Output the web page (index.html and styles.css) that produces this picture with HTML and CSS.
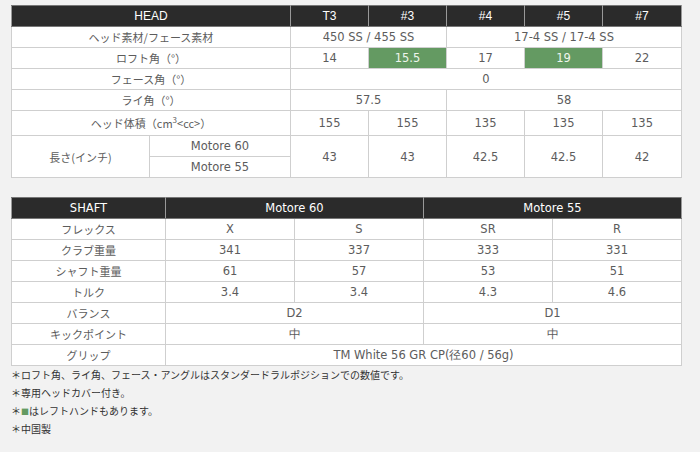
FILE: index.html
```html
<!DOCTYPE html>
<html lang="ja">
<head>
<meta charset="utf-8">
<link rel="stylesheet" href="styles.css">
</head>
<body>
<div class="page">
  <table class="spec head">
    <colgroup>
      <col class="c-lab"><col class="c-sub"><col class="c-d"><col class="c-d"><col class="c-d"><col class="c-d"><col class="c-d7">
    </colgroup>
    <tr class="hd">
      <th colspan="2">HEAD</th><th>T3</th><th>#3</th><th>#4</th><th>#5</th><th>#7</th>
    </tr>
    <tr><td colspan="2" class="jp">ヘッド素材/フェース素材</td><td colspan="2">450 SS / 455 SS</td><td colspan="3">17-4 SS / 17-4 SS</td></tr>
    <tr><td colspan="2" class="jp">ロフト角（°）</td><td>14</td><td class="green">15.5</td><td>17</td><td class="green">19</td><td>22</td></tr>
    <tr><td colspan="2" class="jp">フェース角（°）</td><td colspan="5">0</td></tr>
    <tr><td colspan="2" class="jp">ライ角（°）</td><td colspan="2">57.5</td><td colspan="3">58</td></tr>
    <tr class="tall"><td colspan="2" class="jp">ヘッド体積（cm<sup>3</sup>&lt;cc&gt;）</td><td>155</td><td>155</td><td>135</td><td>135</td><td>135</td></tr>
    <tr><td rowspan="2" class="jp">長さ(インチ)</td><td>Motore 60</td><td rowspan="2">43</td><td rowspan="2">43</td><td rowspan="2">42.5</td><td rowspan="2">42.5</td><td rowspan="2">42</td></tr>
    <tr><td>Motore 55</td></tr>
  </table>

  <table class="spec shaft">
    <colgroup>
      <col class="s-lab"><col class="s-d"><col class="s-d"><col class="s-d"><col class="s-d">
    </colgroup>
    <tr class="hd"><th>SHAFT</th><th colspan="2">Motore 60</th><th colspan="2">Motore 55</th></tr>
    <tr><td class="jp">フレックス</td><td>X</td><td>S</td><td>SR</td><td>R</td></tr>
    <tr><td class="jp">クラブ重量</td><td>341</td><td>337</td><td>333</td><td>331</td></tr>
    <tr><td class="jp">シャフト重量</td><td>61</td><td>57</td><td>53</td><td>51</td></tr>
    <tr><td class="jp">トルク</td><td>3.4</td><td>3.4</td><td>4.3</td><td>4.6</td></tr>
    <tr><td class="jp">バランス</td><td colspan="2">D2</td><td colspan="2">D1</td></tr>
    <tr><td class="jp">キックポイント</td><td colspan="2">中</td><td colspan="2">中</td></tr>
    <tr><td class="jp">グリップ</td><td colspan="4">TM White 56 GR CP(径60 / 56g)</td></tr>
  </table>

  <ul class="notes">
    <li>＊ロフト角、ライ角、フェース・アングルはスタンダードラルポジションでの数値です。</li>
    <li>＊専用ヘッドカバー付き。</li>
    <li>＊<span class="sq">■</span>はレフトハンドもあります。</li>
    <li>＊中国製</li>
  </ul>
</div>
</body>
</html>
```

FILE: styles.css
```css
html, body {
  margin: 0;
  padding: 0;
  background: #f2f2f2;
}
.page {
  padding: 5px 0 0 11px;
  width: 670px;
}
.spec {
  width: 670px;
  border-collapse: collapse;
  table-layout: fixed;
  background: #fff;
  font-family: "DejaVu Sans", Verdana, sans-serif;
  font-size: 11.5px;
  color: #5c5c5c;
}
.spec td, .spec th {
  border: 1px solid #cfcfcf;
  text-align: center;
  padding: 0;
  line-height: 14px;
  white-space: nowrap;
}
.spec tr {
  height: 21px;
}
.spec tr.tall {
  height: 25px;
}
.spec .hd th {
  background: #2b2b2b;
  color: #fff;
  font-family: "Liberation Sans", Arial, sans-serif;
  font-weight: normal;
  font-size: 12px;
  border-color: #777 #999;
}
.shaft .hd th {
  font-family: "DejaVu Sans", Verdana, sans-serif;
  font-size: 11.5px;
}
.spec td.jp {
  font-family: "Noto Sans CJK JP", sans-serif;
  font-size: 11px;
  color: #5c5c5c;
}
.spec sup {
  font-size: 8px;
  line-height: 0;
  vertical-align: 5px;
}
.spec td.green {
  background: #649a62;
  color: #eef5ec;
}
.c-lab { width: 138px; }
.c-sub { width: 141px; }
.c-d { width: 78px; }
.c-d7 { width: 79px; }
.shaft {
  margin-top: 19px;
}
.s-lab { width: 154px; }
.s-d { width: 129px; }
.notes {
  list-style: none;
  margin: 0;
  padding: 0;
  font-family: "Noto Sans CJK JP", sans-serif;
  font-size: 10px;
  color: #333;
}
.notes li {
  height: 18px;
  line-height: 18px;
}
.notes .sq {
  color: #649a62;
  font-size: 8px;
}
```
